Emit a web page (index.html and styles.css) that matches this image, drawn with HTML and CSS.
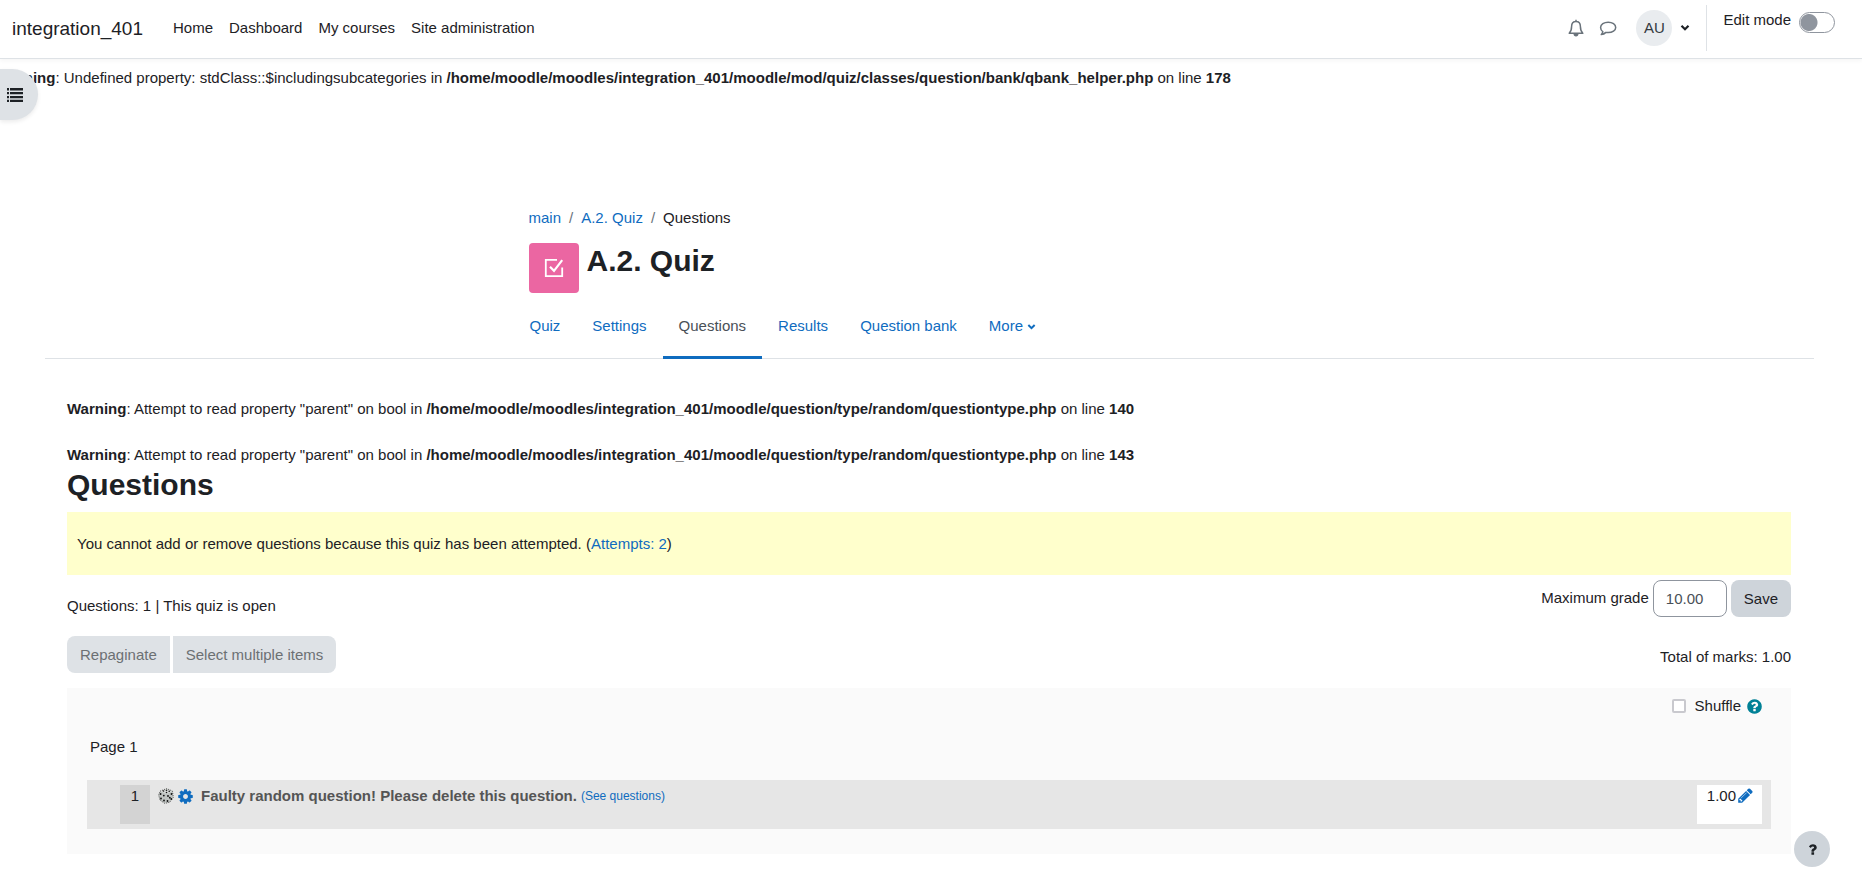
FILE: index.html
```html
<!DOCTYPE html>
<html lang="en">
<head>
<meta charset="utf-8">
<title>A.2. Quiz: Questions</title>
<link rel="stylesheet" href="styles.css">
</head>
<body>
<header class="navbar">
  <a class="brand" href="#">integration_401</a>
  <nav class="primary">
    <a href="#">Home</a>
    <a href="#">Dashboard</a>
    <a href="#">My courses</a>
    <a href="#">Site administration</a>
  </nav>
  <div class="usernav">
    <button class="icon-btn" type="button" aria-label="Notifications">
      <svg width="16" height="18" viewBox="0 0 16 18" fill="none" stroke="#6a737b" stroke-width="1.500"><path d="M8 .8v1.500M1.200 14.200C3 12.500 3.600 10.500 3.600 7.500c0-3 1.600-5 4.400-5s4.400 2 4.400 5c0 3 .6 5 2.400 6.700z" stroke-linejoin="round"/><path d="M6.200 14.700c.2 2.800 3.400 2.800 3.600 0" fill="#6a737b"/></svg>
    </button>
    <button class="icon-btn chat" type="button" aria-label="Messages">
      <svg width="18" height="16" viewBox="0 0 18 16" fill="none" stroke="#6a737b" stroke-width="1.500"><path d="M9.200 2.200c4.200 0 7.500 2.300 7.500 5.200s-3.300 5.200-7.500 5.200c-.8 0-1.600-.1-2.300-.2-1.300 1.300-2.800 2-4.600 2.200.9-.9 1.400-1.900 1.500-3C2.400 10.600 1.600 9.100 1.600 7.400c0-2.900 3.400-5.200 7.600-5.200z" stroke-linejoin="round"/></svg>
    </button>
    <button class="user" type="button" aria-label="User menu">
      <span class="avatar">AU</span>
      <svg width="10" height="8" viewBox="0 0 10 8" fill="none" stroke="#1d2125" stroke-width="2.200"><path d="M1.500 1.800 5 5.300l3.500-3.500"/></svg>
    </button>
    <div class="editmode">
      <label for="editmode">Edit mode</label>
      <input id="editmode" class="switch" type="checkbox">
    </div>
  </div>
</header>

<button class="drawer-toggle" type="button" aria-label="Open course index">
  <svg width="16" height="14" viewBox="0 0 16 14" fill="#1d2125"><path d="M0 0h2v2.500H0zM3 0h13v2.500H3zM0 4h2v2.300H0zM3 4h13v2.300H3zM0 8h2v2.300H0zM3 8h13v2.300H3zM0 11.700h2V14H0zM3 11.700h13V14H3z"/></svg>
</button>

<p class="notice-top"><b>Warning</b>: Undefined property: stdClass::$includingsubcategories in <b>/home/moodle/moodles/integration_401/moodle/mod/quiz/classes/question/bank/qbank_helper.php</b> on line <b>178</b></p>

<div class="page">
  <div class="page-head">
    <nav class="breadcrumb" aria-label="Breadcrumb">
      <a href="#">main</a><span class="sep">/</span><a href="#">A.2. Quiz</a><span class="sep">/</span><span>Questions</span>
    </nav>
    <div class="title">
      <span class="activity">
        <svg width="20" height="22" viewBox="0 0 20 22" fill="none" stroke="#fff" stroke-width="1.800"><path d="M13 2.800H1.800v16.400h16.400V10.500"/><path d="M6 9.800l4 4L18.200 3.200" stroke-width="2.200"/></svg>
      </span>
      <h1>A.2. Quiz</h1>
    </div>
  </div>
  <nav class="tabs">
    <div class="tabs-inner">
      <a href="#">Quiz</a>
      <a href="#">Settings</a>
      <a class="active" href="#">Questions</a>
      <a href="#">Results</a>
      <a href="#">Question bank</a>
      <a href="#">More <svg width="9" height="8" viewBox="0 0 10 8" fill="none" stroke="#0f6cbf" stroke-width="2.200"><path d="M1.500 1.800 5 5.300l3.500-3.500"/></svg></a>
    </div>
  </nav>

  <main class="content">
    <p class="warning"><b>Warning</b>: Attempt to read property "parent" on bool in <b>/home/moodle/moodles/integration_401/moodle/question/type/random/questiontype.php</b> on line <b>140</b></p>
    <p class="warning"><b>Warning</b>: Attempt to read property "parent" on bool in <b>/home/moodle/moodles/integration_401/moodle/question/type/random/questiontype.php</b> on line <b>143</b></p>
    <h2>Questions</h2>
    <div class="status">You cannot add or remove questions because this quiz has been attempted. (<a href="#">Attempts: 2</a>)</div>

    <div class="bar">
      <span class="summary">Questions: 1 | This quiz is open</span>
      <form class="grade">
        <label for="maxgrade">Maximum grade</label>
        <input id="maxgrade" type="text" value="10.00">
        <button class="btn" type="button">Save</button>
      </form>
    </div>
    <div class="bar tools">
      <div class="group">
        <button class="btn" type="button" disabled>Repaginate</button>
        <button class="btn" type="button" disabled>Select multiple items</button>
      </div>
      <span class="total">Total of marks: 1.00</span>
    </div>

    <section class="slots">
      <div class="shuffle">
        <input id="shuffle" type="checkbox">
        <label for="shuffle">Shuffle</label>
        <svg width="17" height="17" viewBox="0 0 1792 1792" fill="#008196"><path d="M1024 1376v-192q0-14-9-23t-23-9h-192q-14 0-23 9t-9 23v192q0 14 9 23t23 9h192q14 0 23-9t9-23zm256-672q0-88-55.500-163t-138.500-116-170-41q-243 0-371 213-15 24 8 42l132 100q7 6 19 6 16 0 25-12 53-68 86-92 34-24 86-24 48 0 85.500 26t37.500 59q0 38-20 61t-68 45q-63 28-115.500 86.500t-52.500 125.500v36q0 14 9 23t23 9h192q14 0 23-9t9-23q0-19 21.500-49.500t54.500-49.500q32-18 49-28.500t46-35 44.500-48 28-60.500 12.500-81zm384 192q0 209-103 385.500t-279.500 279.500-385.500 103-385.500-103-279.500-279.500-103-385.500 103-385.500 279.500-279.500 385.500-103 385.500 103 279.500 279.500 103 385.500z"/></svg>
      </div>
      <h3>Page 1</h3>
      <div class="slot">
        <span class="num">1</span>
        <svg class="dice" width="16" height="16" viewBox="0 0 16 16"><path d="M2 3.200 8.500.6 14.500 3l.8 6.500-3.500 4.700-5 1.200L2 12.200.6 7z" fill="#bfc3c1"/><path d="M2 3.200 8.500 6l6-3L8.500.6z" fill="#d6d9d7"/><path d="M2 3.200 8.500.6 14.500 3l.8 6.500-3.500 4.700-5 1.200L2 12.200.6 7z" fill="none" stroke="#555" stroke-dasharray="1 1.200"/><g fill="#111"><circle cx="5.500" cy="3" r=".8"/><circle cx="8.500" cy="2.200" r=".8"/><circle cx="11.200" cy="3.200" r=".8"/><circle cx="8.500" cy="4.500" r=".8"/><circle cx="2.600" cy="6" r=".9"/><circle cx="5.800" cy="7.600" r=".9"/><circle cx="3" cy="10.500" r=".9"/><circle cx="6" cy="12.500" r=".9"/><circle cx="10" cy="8" r=".9"/><circle cx="13.500" cy="6" r=".9"/><circle cx="11.800" cy="9.700" r=".9"/><circle cx="9.500" cy="13" r=".9"/><circle cx="13.300" cy="11" r=".9"/></g></svg>
        <svg class="gear" width="17" height="17" viewBox="0 0 1792 1792" fill="#0f6cbf"><path d="M1152 896q0-106-75-181t-181-75-181 75-75 181 75 181 181 75 181-75 75-181zm512-109v222q0 12-8 23t-20 13l-185 28q-19 54-39 91 35 50 107 138 10 12 10 25t-9 23q-27 37-99 108t-94 71q-12 0-26-9l-138-108q-44 23-91 38-16 136-29 186-7 28-36 28h-222q-14 0-24.500-8.500t-11.500-21.500l-28-184q-49-16-90-37l-141 107q-10 9-25 9-14 0-25-11-126-114-165-168-7-10-7-23 0-12 8-23 15-21 51-66.500t54-70.500q-27-50-41-99l-183-27q-13-2-21-12.500t-8-23.500v-222q0-12 8-23t19-13l186-28q14-46 39-92-40-57-107-138-10-12-10-24 0-10 9-23 26-36 98.500-107.500t94.500-71.500q13 0 26 10l138 107q44-23 91-38 16-136 29-186 7-28 36-28h222q14 0 24.500 8.500t11.500 21.500l28 184q49 16 90 37l142-107q9-9 24-9 13 0 25 10 129 119 165 170 7 8 7 22 0 12-8 23-15 21-51 66.500t-54 70.500q26 50 41 98l183 28q13 2 21 12.500t8 23.500z"/></svg>
        <b class="qname">Faulty random question! Please delete this question.</b>
        <a class="see" href="#">(See questions)</a>
        <span class="mark">1.00<svg width="17" height="17" viewBox="0 0 1792 1792" fill="#0f6cbf"><path d="M491 1536l91-91-235-235-91 91v107h128v128h107zm523-928q0-22-22-22-10 0-17 7l-542 542q-7 7-7 17 0 22 22 22 10 0 17-7l542-542q7-7 7-17zm-54-192l416 416-832 832h-416v-416zm683 96q0 53-37 90l-166 166-416-416 166-165q36-38 90-38 53 0 91 38l235 234q37 39 37 91z"/></svg></span>
      </div>
    </section>
  </main>
</div>

<button class="help-float" type="button" aria-label="Show footer">
  <svg width="15" height="15" viewBox="0 0 1792 1792" fill="#1d2125"><path d="M1088 1256v240q0 16-12 28t-28 12h-240q-16 0-28-12t-12-28v-240q0-16 12-28t28-12h240q16 0 28 12t12 28zm316-600q0 54-15.500 101t-35 76.500-55 59.500-57.500 43.500-61 35.500q-41 23-68.500 65t-27.500 67q0 17-12 32.500t-28 15.500h-240q-15 0-25.500-18.500t-10.500-37.500v-45q0-83 65-156.500t143-108.500q59-27 84-56t25-76q0-42-46.500-74t-107.500-32q-65 0-108 29-35 25-107 115-13 16-31 16-12 0-25-8l-164-125q-13-10-15.500-25t5.500-28q160-266 464-266 80 0 161 31t146 83 106 127.500 41 158.500z"/></svg>
</button>
</body>
</html>
```
FILE: styles.css
```css
* { box-sizing: border-box; }
body {
  margin: 0;
  font: 15px/22px "Liberation Sans", Arial, sans-serif;
  color: #1d2125;
  background: #fff;
}
a { color: #0f6cbf; text-decoration: none; }
p, h1, h2, h3 { margin: 0; }
svg { flex: none; }
button { font: inherit; color: inherit; border: 0; padding: 0; background: none; }

.navbar {
  display: flex;
  align-items: stretch;
  height: 59px;
  padding-left: 12px;
  border-bottom: 1px solid #dee2e6;
  box-shadow: 0 2px 4px rgba(0, 0, 0, .04);
}
.navbar a { color: #1d2125; }
.brand { font-size: 19px; align-self: center; margin-right: 30px; }
.primary { display: flex; align-items: center; gap: 16px; padding-bottom: 3px; }
.usernav { display: flex; align-items: center; margin-left: auto; padding-bottom: 2px; }
.icon-btn { display: flex; }
.chat { margin-left: 15px; }
.user { display: flex; align-items: center; gap: 8px; margin: 0 16px 0 19px; }
.avatar {
  width: 36px;
  height: 36px;
  line-height: 36px;
  border-radius: 50%;
  background: #e9ecef;
  color: #343a40;
  text-align: center;
}
.editmode {
  display: flex;
  align-items: flex-start;
  gap: 8px;
  height: 46px;
  padding: 4px 27px 0 16px;
  border-left: 1px solid #dee2e6;
}
.switch {
  appearance: none;
  width: 36px;
  height: 21px;
  margin: 3px 0 0;
  border: 1px solid #8f959e;
  border-radius: 11px;
  background: radial-gradient(circle at 9px 50%, #8f959e 8px, transparent 9px) #fff;
}

.drawer-toggle {
  position: absolute;
  left: 0;
  top: 69px;
  width: 38px;
  height: 51px;
  padding-left: 7px;
  display: flex;
  align-items: center;
  border-radius: 0 26px 26px 0;
  background: #dee2e6;
  box-shadow: 0 2px 4px rgba(0, 0, 0, .08);
}
.notice-top { padding-top: 8px; margin-left: -4px; }

.page { margin: 118px 48px 0 45px; }
.page-head, .tabs-inner { max-width: 832px; margin: 0 auto; padding: 0 15px; }
.breadcrumb { display: flex; gap: 8px; }
.sep { color: #6a737b; }
.title { display: flex; gap: 8px; margin-top: 14px; }
.activity {
  display: flex;
  align-items: center;
  justify-content: center;
  width: 50px;
  height: 50px;
  border-radius: 4px;
  background: #eb66a2;
}
h1, h2 { font-size: 30px; line-height: 36px; font-weight: 700; }
.tabs { border-bottom: 1px solid #dee2e6; }
.tabs-inner { display: flex; padding: 0; margin-bottom: -1px; }
.tabs-inner a { padding: 22px 16px 19px; border-bottom: 3px solid transparent; }
.tabs-inner .active { color: #495057; border-color: #0f6cbf; }

.content { padding: 15px 23px 0 22px; }
.warning { padding-top: 24px; }
h2 { margin-top: 1px; }
.status { margin-top: 9px; padding: 20px 10px; line-height: 23px; background: #ffc; }
.bar { display: flex; justify-content: space-between; align-items: flex-start; }
.summary { padding-top: 20px; }
.grade { display: flex; align-items: center; gap: 4px; padding-top: 5px; }
.grade label { padding-bottom: 2px; }
.grade input {
  width: 74px;
  height: 37px;
  padding: 0 12px;
  font: inherit;
  color: #495057;
  border: 1px solid #8f959e;
  border-radius: 8px;
}
.btn { height: 37px; padding: 0 13px; border-radius: 8px; background: #ced4da; }
.tools { margin-top: 19px; }
.group { display: flex; gap: 3px; }
.group .btn { color: #6c7073; background: #dee2e6; }
.group .btn:first-child { border-radius: 8px 0 0 8px; }
.group .btn:last-child { border-radius: 0 8px 8px 0; }
.total { padding-top: 10px; }

.slots { margin-top: 15px; padding: 7px 20px 25px; background: #fafafa; }
.shuffle { display: flex; align-items: center; justify-content: flex-end; gap: 5px; padding-right: 8px; }
.shuffle input {
  appearance: none;
  width: 14px;
  height: 14px;
  margin: 0 4px 0 0;
  border: 2px solid #c9c9ce;
  border-radius: 2px;
  background: #fff;
}
h3 { margin: 19px 3px 22px; font-size: 15px; font-weight: 400; }
.slot {
  display: flex;
  align-items: flex-start;
  padding: 5px 9px 5px 33px;
  background: #e6e6e6;
}
.num { width: 30px; height: 39px; background: #d3d3d3; text-align: center; }
.dice { margin: 3px 3px 0 8px; }
.gear { margin-top: 3px; }
.qname { margin-left: 7px; color: #555; }
.see { margin-left: 4px; font-size: 12px; }
.mark { display: flex; gap: 1px; margin-left: auto; height: 39px; padding: 0 8px 0 10px; background: #fff; }
.mark svg { margin-top: 2px; }

.help-float {
  position: fixed;
  right: 32px;
  bottom: 28px;
  width: 36px;
  height: 36px;
  display: flex;
  align-items: center;
  justify-content: center;
  border-radius: 50%;
  background: #ced4da;
}
```
